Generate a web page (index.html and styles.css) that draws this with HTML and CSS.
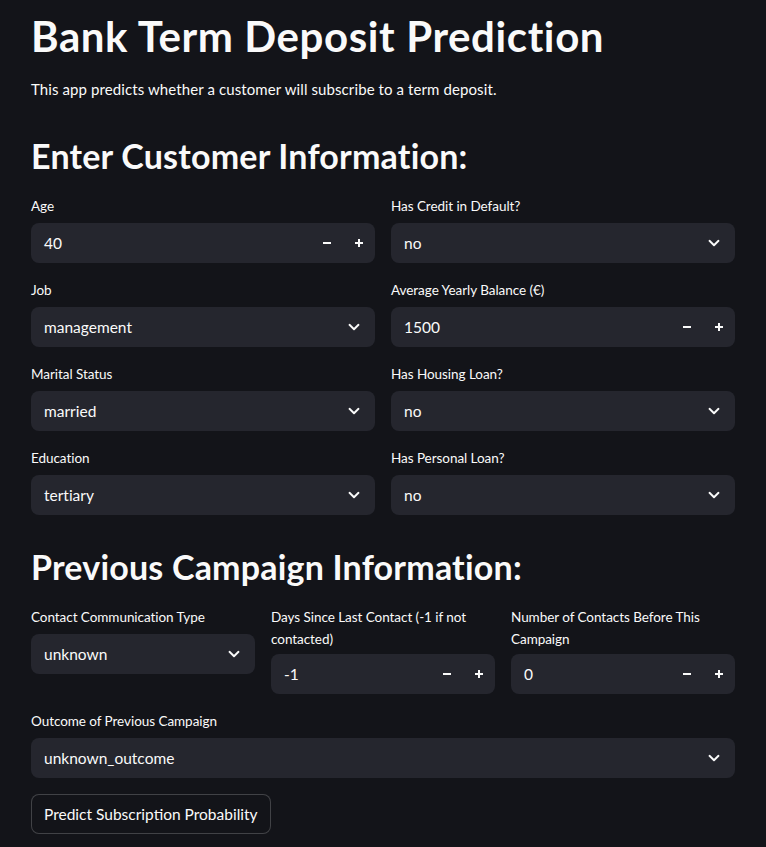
FILE: index.html
```html
<!DOCTYPE html>
<html lang="en">
<head>
<meta charset="utf-8">
<title>Bank Term Deposit Prediction</title>
<link rel="stylesheet" href="styles.css">
</head>
<body>
<main class="main">
  <h1 class="title">Bank Term Deposit Prediction</h1>
  <p class="intro">This app predicts whether a customer will subscribe to a term deposit.</p>

  <h2 class="section">Enter Customer Information:</h2>
  <div class="grid2">
    <div class="col">
      <div class="field">
        <div class="label">Age</div>
        <div class="box number"><span class="value">40</span>
          <span class="step"><svg width="10" height="10" viewBox="0 0 10 10"><path d="M1 5h8" stroke="#fafafa" stroke-width="2"/></svg></span>
          <span class="step"><svg width="10" height="10" viewBox="0 0 10 10"><path d="M1 5h8M5 1v8" stroke="#fafafa" stroke-width="2"/></svg></span>
        </div>
      </div>
      <div class="field">
        <div class="label">Job</div>
        <div class="box select"><span class="value">management</span>
          <span class="chev"><svg width="12" height="8" viewBox="0 0 12 8"><path d="M1.5 1.8L6 6.2l4.5-4.4" fill="none" stroke="#fafafa" stroke-width="1.9" stroke-linecap="round" stroke-linejoin="round"/></svg></span>
        </div>
      </div>
      <div class="field">
        <div class="label">Marital Status</div>
        <div class="box select"><span class="value">married</span>
          <span class="chev"><svg width="12" height="8" viewBox="0 0 12 8"><path d="M1.5 1.8L6 6.2l4.5-4.4" fill="none" stroke="#fafafa" stroke-width="1.9" stroke-linecap="round" stroke-linejoin="round"/></svg></span>
        </div>
      </div>
      <div class="field">
        <div class="label">Education</div>
        <div class="box select"><span class="value">tertiary</span>
          <span class="chev"><svg width="12" height="8" viewBox="0 0 12 8"><path d="M1.5 1.8L6 6.2l4.5-4.4" fill="none" stroke="#fafafa" stroke-width="1.9" stroke-linecap="round" stroke-linejoin="round"/></svg></span>
        </div>
      </div>
    </div>
    <div class="col">
      <div class="field">
        <div class="label">Has Credit in Default?</div>
        <div class="box select"><span class="value">no</span>
          <span class="chev"><svg width="12" height="8" viewBox="0 0 12 8"><path d="M1.5 1.8L6 6.2l4.5-4.4" fill="none" stroke="#fafafa" stroke-width="1.9" stroke-linecap="round" stroke-linejoin="round"/></svg></span>
        </div>
      </div>
      <div class="field">
        <div class="label">Average Yearly Balance (€)</div>
        <div class="box number"><span class="value">1500</span>
          <span class="step"><svg width="10" height="10" viewBox="0 0 10 10"><path d="M1 5h8" stroke="#fafafa" stroke-width="2"/></svg></span>
          <span class="step"><svg width="10" height="10" viewBox="0 0 10 10"><path d="M1 5h8M5 1v8" stroke="#fafafa" stroke-width="2"/></svg></span>
        </div>
      </div>
      <div class="field">
        <div class="label">Has Housing Loan?</div>
        <div class="box select"><span class="value">no</span>
          <span class="chev"><svg width="12" height="8" viewBox="0 0 12 8"><path d="M1.5 1.8L6 6.2l4.5-4.4" fill="none" stroke="#fafafa" stroke-width="1.9" stroke-linecap="round" stroke-linejoin="round"/></svg></span>
        </div>
      </div>
      <div class="field">
        <div class="label">Has Personal Loan?</div>
        <div class="box select"><span class="value">no</span>
          <span class="chev"><svg width="12" height="8" viewBox="0 0 12 8"><path d="M1.5 1.8L6 6.2l4.5-4.4" fill="none" stroke="#fafafa" stroke-width="1.9" stroke-linecap="round" stroke-linejoin="round"/></svg></span>
        </div>
      </div>
    </div>
  </div>

  <h2 class="section section-next">Previous Campaign Information:</h2>
  <div class="grid3">
    <div class="field">
      <div class="label">Contact Communication Type</div>
      <div class="box select"><span class="value">unknown</span>
        <span class="chev"><svg width="12" height="8" viewBox="0 0 12 8"><path d="M1.5 1.8L6 6.2l4.5-4.4" fill="none" stroke="#fafafa" stroke-width="1.9" stroke-linecap="round" stroke-linejoin="round"/></svg></span>
      </div>
    </div>
    <div class="field">
      <div class="label">Days Since Last Contact (-1 if not contacted)</div>
      <div class="box number"><span class="value">-1</span>
        <span class="step"><svg width="10" height="10" viewBox="0 0 10 10"><path d="M1 5h8" stroke="#fafafa" stroke-width="2"/></svg></span>
        <span class="step"><svg width="10" height="10" viewBox="0 0 10 10"><path d="M1 5h8M5 1v8" stroke="#fafafa" stroke-width="2"/></svg></span>
      </div>
    </div>
    <div class="field">
      <div class="label">Number of Contacts Before This Campaign</div>
      <div class="box number"><span class="value">0</span>
        <span class="step"><svg width="10" height="10" viewBox="0 0 10 10"><path d="M1 5h8" stroke="#fafafa" stroke-width="2"/></svg></span>
        <span class="step"><svg width="10" height="10" viewBox="0 0 10 10"><path d="M1 5h8M5 1v8" stroke="#fafafa" stroke-width="2"/></svg></span>
      </div>
    </div>
  </div>

  <div class="field outcome">
    <div class="label">Outcome of Previous Campaign</div>
    <div class="box select"><span class="value">unknown_outcome</span>
      <span class="chev"><svg width="12" height="8" viewBox="0 0 12 8"><path d="M1.5 1.8L6 6.2l4.5-4.4" fill="none" stroke="#fafafa" stroke-width="1.9" stroke-linecap="round" stroke-linejoin="round"/></svg></span>
    </div>
  </div>

  <button class="btn" type="button">Predict Subscription Probability</button>
</main>
</body>
</html>
```

FILE: styles.css
```css
html, body {
  margin: 0;
  padding: 0;
  background: #131419;
  color: #fafafa;
  font-family: Lato, "Noto Sans", sans-serif;
  font-variant-ligatures: none;
}

.main {
  padding: 10px 31px 0;
}

.title {
  margin: 0;
  font-size: 42px;
  line-height: 53px;
  font-weight: 700;
  letter-spacing: 0.6px;
}

.intro {
  margin: 14px 0 0;
  font-size: 15px;
  line-height: 25.6px;
  letter-spacing: 0.1px;
}

.section {
  margin: 31px 0 0;
  font-size: 34px;
  line-height: 43px;
  font-weight: 700;
  letter-spacing: 0.2px;
}

.section-next {
  margin-top: 30px;
}

.grid2 {
  margin-top: 18px;
  display: grid;
  grid-template-columns: 1fr 1fr;
  column-gap: 16px;
}

.col {
  display: flex;
  flex-direction: column;
  gap: 16px;
}

.grid3 {
  margin-top: 18px;
  display: grid;
  grid-template-columns: 1fr 1fr 1fr;
  column-gap: 16px;
  align-items: start;
}

.label {
  font-size: 13.5px;
  line-height: 22.4px;
  min-height: 24px;
  margin-bottom: 4px;
  letter-spacing: -0.05px;
}

.box {
  height: 40px;
  background: #25262e;
  border-radius: 8px;
  display: flex;
  align-items: center;
  font-size: 15.5px;
}

.value {
  flex: 1;
  padding-left: 13px;
}

.step {
  width: 32px;
  height: 40px;
  display: flex;
  align-items: center;
  justify-content: center;
}

.chev {
  width: 20px;
  margin-right: 11px;
  display: flex;
  justify-content: center;
  align-items: center;
}

.outcome {
  margin-top: 16px;
}

.btn {
  margin-top: 16px;
  height: 40px;
  padding: 0 12px;
  background: #131419;
  color: #fafafa;
  border: 1px solid rgba(250, 250, 250, 0.2);
  border-radius: 8px;
  font-family: inherit;
  font-size: 15.5px;
}
```
